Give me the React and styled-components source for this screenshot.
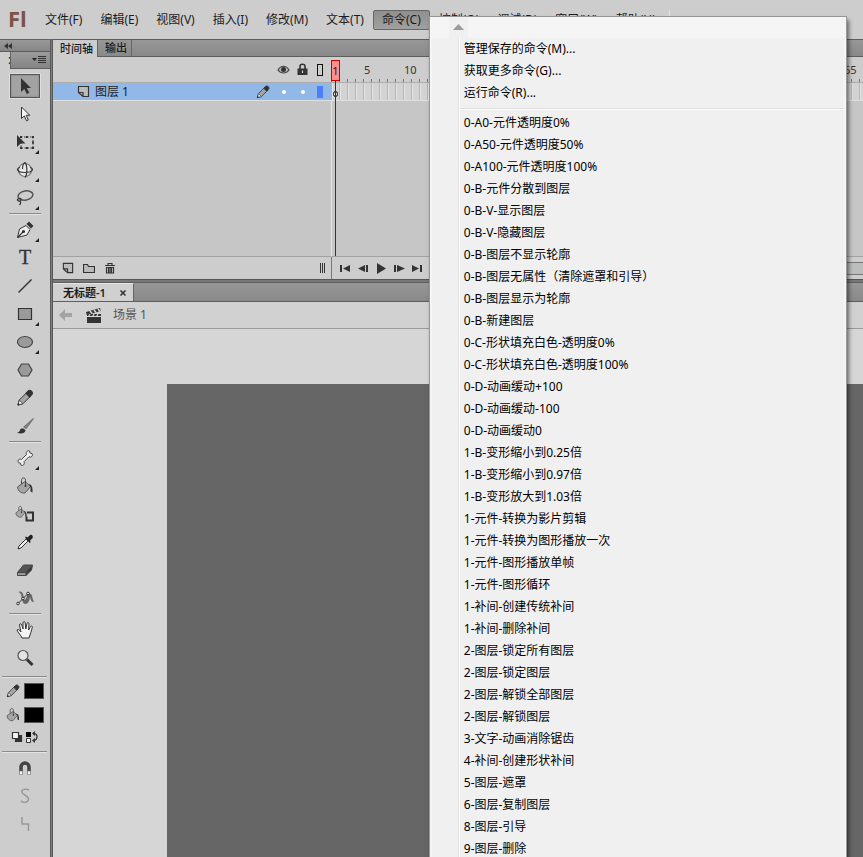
import React from "react";
import styled, { createGlobalStyle, css } from "styled-components";

const Global = createGlobalStyle`
  *, *::before, *::after { box-sizing: border-box; }
  body { margin: 0; background: #cdcdcd; }
  body, button { font-family: "Noto Sans", "Noto Sans CJK SC", sans-serif; font-size: 12px; line-height: 16px; color: #1c1c1c; }
  button { border: 0; padding: 0; background: none; white-space: nowrap; }
  ul { list-style: none; margin: 0; padding: 0; }
  svg { display: block; flex: none; }
`;

const Shell = styled.div`
  height: 100vh;
  overflow: hidden;
  display: flex;
  flex-direction: column;
  background: #cdcdcd;
`;

/* ---------- menu bar ---------- */
const MenuBar = styled.header`
  flex: none;
  height: 39px;
  display: flex;
  align-items: center;
`;
const Logo = styled.div`
  width: 36px;
  padding: 0 0 4px 8px;
  font: bold 22px/28px "Open Sans", "Noto Sans", sans-serif;
  color: #7d5348;
`;
const Menus = styled.ul`
  display: flex;
  height: 20px;
  padding-right: 4px;
  border-right: 1px solid #e4e4e4;
`;
const MenuHolder = styled.li`
  position: relative;
`;
const MenuButton = styled.button`
  height: 20px;
  padding: 0 8px;
  border: 1px solid transparent;
  border-radius: 2px;
  ${(p) => p.$open && css`
    background: linear-gradient(#8f8f8f, #a0a0a0);
    border-color: #666;
  `}
`;
const Popup = styled.div`
  position: absolute;
  z-index: 5;
  top: 6px;
  left: calc(100% - 1px);
  width: 418px;
  border: 1px solid #979797;
  background: #f5f5f5;
  box-shadow: 2px 4px 4px rgba(0, 0, 0, 0.5);
  padding: 0 2px;
`;
const ScrollUp = styled.button`
  display: grid;
  place-items: center;
  width: 19px;
  height: 21px;
  margin-left: 17px;
  background: #f0f0f0;
`;
const PopupBody = styled.ul`
  background: linear-gradient(90deg, #f0f0f0 26px, #e2e2e2 26px, #e2e2e2 27px, #fff 27px, #fff 28px, #f0f0f0 28px);
`;
const PopupItem = styled.button`
  display: block;
  width: 100%;
  height: 22px;
  padding-left: 32px;
  line-height: 22px;
  text-align: left;
  color: #000;
`;
const PopupRule = styled.hr`
  height: 2px;
  margin: 0 0 0 28px;
  border: 0;
  border-top: 1px solid #e0e0e0;
  border-bottom: 1px solid #fff;
`;
const RuleRow = styled.li`
  padding: 4px 0 2px;
`;

/* ---------- tool panel ---------- */
const Workspace = styled.div`
  flex: 1;
  min-height: 0;
  display: flex;
`;
const ToolPanel = styled.aside`
  flex: none;
  display: flex;
  flex-direction: column;
  width: 53px;
  border-right: 3px double #585858;
  border-top: 1px solid #626262;
  background: linear-gradient(#cdcdcd, #cdcdcd) padding-box, #7e7e7e;
`;
const PanelHead = styled.button`
  display: flex;
  width: 100%;
  height: 12px;
  align-items: center;
  padding-left: 4px;
  background: linear-gradient(#999, #858585);
  border-bottom: 1px solid #5c5c5c;
`;
const PanelTitle = styled.div`
  display: flex;
  height: 20px;
`;
const ClippedTitle = styled.span`
  width: 10px;
  padding-left: 8px;
  overflow: hidden;
`;
const PanelMenu = styled.button`
  flex: 1;
  height: 17px;
  display: flex;
  align-items: center;
  justify-content: flex-end;
  padding-right: 4px;
  background: linear-gradient(#9b9b9b, #848484);
  border: 1px solid #606060;
  border-width: 0 0 1px 1px;
`;
const Tool = styled.button`
  position: relative;
  flex: none;
  display: grid;
  place-items: center;
  width: 30px;
  height: 24px;
  margin: 2px 10px;
  opacity: ${(p) => (p.$off ? 0.35 : 1)};
  ${(p) => p.$on && css`
    background: #a3a3a3;
    border: 1px solid #555;
    box-shadow: 0 0 0 1px #dedede, inset 0 0 2px #777;
  `}
  ${(p) => p.$more && css`
    &::after {
      content: "";
      position: absolute;
      right: 1px;
      bottom: 0;
      border: 2px solid #222;
      border-top-color: transparent;
      border-left-color: transparent;
    }
  `}
`;
const ToolRule = styled.hr`
  flex: none;
  height: 2px;
  margin: ${(p) => (p.$wide ? "4px 3px 1px 2px" : "1px 9px")};
  border: 0;
  border-top: 1px solid #8a8a8a;
  border-bottom: 1px solid #e4e4e4;
`;
const SwatchRow = styled.div`
  height: 24px;
  display: flex;
  align-items: center;
  gap: 3px;
  padding-left: 5px;
`;
const Swatch = styled.button`
  width: 20px;
  height: 16px;
  background: #000;
  border: 1px solid #555;
`;
const SwapRow = styled.div`
  height: 20px;
  display: flex;
  align-items: center;
  gap: 3px;
  padding-left: 11px;
`;

/* ---------- timeline ---------- */
const Content = styled.main`
  flex: 1;
  min-width: 0;
  display: flex;
  flex-direction: column;
`;
const TabBar = styled.div`
  flex: none;
  display: flex;
  height: ${(p) => p.$h}px;
  background: linear-gradient(#979797, #898989);
  border-top: 1px solid #5e5e5e;
  border-bottom: 1px solid #5e5e5e;
`;
const Tab = styled.button`
  padding: 0 4px 0 7px;
  border-right: 1px solid #666;
  font-size: 11px;
  font-weight: 500;
  ${(p) => p.$on && css`
    background: #cdcdcd;
    margin-bottom: -1px;
  `}
`;
const Timeline = styled.section`
  flex: none;
  display: grid;
  grid-template-columns: 278px 1fr;
  grid-template-rows: 26px 18px 156px 22px;
  overflow: hidden;
`;
const LayerHead = styled.div`
  display: flex;
  justify-content: flex-end;
  align-items: center;
  padding-right: 4px;
  background: #cdcdcd;
  border-bottom: 1px solid #adadad;
`;
const Cell = styled.span`
  display: grid;
  place-items: center;
  width: ${(p) => p.$w || 19}px;
`;
const LayerRow = styled.div`
  display: flex;
  align-items: center;
  padding: 0 4px 0 24px;
  background: #92b8e8;
  border-bottom: 1px solid #e0e0e0;
`;
const LayerName = styled.span`
  flex: 1;
  padding-left: 5px;
`;
const Dot = styled.i`
  width: 4px;
  height: 4px;
  border-radius: 2px;
  background: #fff;
`;
const Outline = styled.i`
  width: 6px;
  height: 12px;
  border: 1px solid ${(p) => (p.$fill ? "#4d7dff" : "#111")};
  background: ${(p) => (p.$fill ? "#4d7dff" : "transparent")};
`;
const Ruler = styled.div`
  display: flex;
  border-bottom: 1px solid #adadad;
  background:
    repeating-linear-gradient(90deg, #777 0 1px, transparent 1px 8px) left bottom / 100% 3px no-repeat,
    #cdcdcd;
`;
const PlayheadSlot = styled.div`
  flex: none;
  width: 32px;
  padding-top: 3px;
`;
const Mark = styled.span`
  flex: none;
  width: 40px;
  padding-top: 6px;
  padding-left: 1px;
  font-size: 11px;
  line-height: 14px;
  color: #333;
`;
const Playhead = styled.div`
  position: relative;
  z-index: 2;
  width: 9px;
  height: 21px;
  border: 1px solid #c00;
  background: #ff8f8f;
  font-size: 11px;
  line-height: 19px;
  text-align: center;
  &::after {
    content: "";
    position: absolute;
    left: 3px;
    top: 20px;
    height: 175px;
    border-left: 1px solid #b00000;
  }
`;
const Frames = styled.div`
  display: flex;
  align-items: flex-end;
  padding: 0 0 3px 2px;
  background:
    repeating-linear-gradient(90deg, #b5b5b5 0 1px, #e4e4e4 1px 2px, #d3d3d3 2px 8px);
  border-bottom: 1px solid #e0e0e0;
`;
const Key = styled.i`
  width: 5px;
  height: 6px;
  border: 1px solid #111;
  border-radius: 3px;
`;
const Blank = styled.div`
  background: #c6c6c6;
  border-bottom: 1px solid #a2a2a2;
  border-left: ${(p) => (p.$edge ? "1px solid #e6e6e6" : "0")};
`;
const LayerTools = styled.div`
  display: flex;
  align-items: center;
  gap: 9px;
  padding: 0 5px 0 9px;
  background: #cdcdcd;
`;
const IconButton = styled.button`
  display: grid;
  place-items: center;
  margin-left: ${(p) => (p.$end ? "auto" : "0")};
`;
const Playback = styled.div`
  display: flex;
  align-items: center;
  gap: 5px;
  padding-left: 7px;
  background: #cdcdcd;
  border-left: 1px solid #777;
`;
const ScrollTrack = styled.div`
  flex: 1;
  height: 13px;
  margin-left: 80px;
  background: #babebd;
  border: 1px solid #777;
  border-width: 1px 0;
`;
const Split = styled.div`
  flex: none;
  height: 3px;
  border-top: 1px solid #565656;
  background: #787878;
`;

/* ---------- document ---------- */
const DocTab = styled.div`
  display: flex;
  align-items: center;
  gap: 13px;
  padding: 0 6px 0 10px;
  background: #d0d0d0;
  border-right: 1px solid #666;
  border-top: 1px solid #e4e4e4;
  font-size: 11px;
  font-weight: 600;
`;
const SceneBar = styled.nav`
  flex: none;
  height: 27px;
  display: flex;
  align-items: center;
  padding-left: 6px;
  background: #d1d1d1;
  border-bottom: 1px solid #999;
  color: #555;
`;
const Clap = styled.span`
  padding: 0 11px 0 13px;
`;
const Pasteboard = styled.div`
  flex: 1;
  display: flex;
  padding: 55px 0 0 114px;
  background: #d6d6d6;
`;
const Stage = styled.div`
  flex: 1;
  background: #666;
`;

/* ---------- icons ---------- */
const Svg = ({ w = 20, h = 20, vb, children }) => (
  <svg width={w} height={h} viewBox={vb || `0 0 ${w} ${h}`} fill="none" stroke="#333" strokeWidth="1.2" aria-hidden="true">
    {children}
  </svg>
);
const PencilShape = () => (
  <>
    <path d="M3 17l1.300-5L12 4.300l3.700 3.700L8 15.700z" fill="#a5a5a5" strokeWidth="1" />
    <path d="M11 5.300l2.300-2.300c1-1 2.600-.4 3.300.3s1.300 2.300.2 3.300L14.600 9z" fill="#333" />
    <path d="M3 17l1.300-5 3.700 3.700z" fill="#f2f2f2" strokeWidth=".8" />
    <path d="M2.500 17.500l.8-2.500 1.700 1.700z" fill="#222" stroke="none" />
  </>
);
const BucketShape = () => (
  <>
    <path d="M2.500 11L10 5.500l5.500 5L10 17c-3.500.5-7-1.500-7.500-6z" fill="#a6a6a6" stroke="#555" strokeWidth="1" />
    <path d="M6.500 8V4.500c0-3.500 4-3.500 4 0v5" stroke="#444" strokeWidth="1" />
    <circle cx="10.500" cy="10" r="1" fill="#333" stroke="none" />
    <path d="M13.500 8c3 .3 4.500 3 4 8.500l-2-1V11z" fill="#333" stroke="none" />
  </>
);
const PageShape = () => <path d="M1.500 1.500h10v10H6l-4.500-4zM1.500 7.500H6v4" fill="#bcbcbc" />;

const icons = {
  select: <path d="M6 2v14l3.300-3 2.500 5 2.500-1.200-2.500-4.800H16z" fill="#333" stroke="none" />,
  subselect: <path d="M6.500 3v11.500l2.800-2.500 2.200 4.800 1.800-.8-2.100-4.700h3.600z" fill="#f5f5f5" strokeWidth="1" />,
  transform: (
    <>
      <path d="M6 5h12v11H6z" strokeDasharray="1.500 1.500" strokeWidth="1" />
      <path d="M5 4h2v2H5zM11 4h2v2h-2zM17 4h2v2h-2zM17 9.500h2v2h-2zM17 15h2v2h-2zM11 15h2v2h-2zM5 15h2v2H5z" fill="#333" stroke="none" />
      <path d="M2 3v12l3.500-3.500h5z" fill="#333" stroke="none" />
    </>
  ),
  rotate: (
    <>
      <circle cx="10" cy="10" r="6.500" fill="#e8e8e8" stroke="#777" />
      <path d="M10 2.500c2.500 3 2.500 12 0 15M2.500 9.500c0 4 15 4 15 0M2.500 9.500c0-1.500 1.500-2 2.500-2.300M17.500 9.500c0-1.500-1.500-2-2.500-2.300M10 2.500C8 3.500 7.500 7 7.500 9" />
    </>
  ),
  lasso: (
    <>
      <ellipse cx="10.500" cy="7.500" rx="7.500" ry="4.500" transform="rotate(-10 10.500 7.500)" strokeWidth="1.500" stroke="#555" />
      <path d="M4.500 10.500c-3 0-2.500 3 0 2.500s1.500-3 0-2.500M5 13c1 1 1 2.500-.5 4" />
    </>
  ),
  pen: (
    <>
      <path d="M2.500 17.500l2-8.500 6.500-3.500 4 4L12 15z" fill="#eee" strokeWidth="1" />
      <path d="M2.500 17.500l6-6" />
      <circle cx="8.500" cy="11.500" r="1" fill="#333" />
      <path d="M11.500 4l2.500-2.500L18.500 6 16 8.500z" fill="#333" stroke="none" />
    </>
  ),
  text: <text x="10" y="16" textAnchor="middle" fontFamily="Liberation Serif, serif" fontSize="20" fill="#333" strokeWidth=".3">T</text>,
  line: <path d="M3.500 16.500l13-13" strokeWidth="1.500" />,
  rect: <path d="M3.500 4.500h13v11h-13z" fill="#9a9a9a" />,
  oval: <ellipse cx="10" cy="10" rx="7.500" ry="5.500" fill="#9a9a9a" stroke="#444" />,
  poly: <path d="M6.500 4h7l3.500 6-3.500 6h-7L3 10z" fill="#9a9a9a" stroke="#444" />,
  pencil: <PencilShape />,
  brush: (
    <>
      <path d="M18.500 2.500L11 12.500l-2-1.500z" fill="#888" stroke="#777" />
      <path d="M2 16.500c2 0 2.500-1 3-2.500 1-2 4-2 5.500.5-.5 3-5 4-8.500 2z" fill="#333" stroke="none" />
    </>
  ),
  bone: <path d="M6.500 11.500l5-5c-1-2.500 1-4.500 3-3.500l.5 2 2 .5c1.500 2-.8 4.500-3 3.200l-5 5c1 2.500-1 4.500-3 3.500l-.5-2-2-.5c-1.500-2 .5-4.500 3-3.200z" fill="#eee" stroke="#444" strokeWidth="1" />,
  bucket: <BucketShape />,
  ink: (
    <>
      <g transform="translate(-1 1) scale(.72)"><BucketShape /></g>
      <path d="M12 8.500h6v8h-6.500v-4" strokeWidth="2" />
    </>
  ),
  dropper: (
    <>
      <path d="M3 17l1-3 7-7 2 2-7 7z" fill="#eee" strokeWidth="1" />
      <path d="M10 5.500l1-1 1.500 1 2-2c1-1 2.500-.8 3 .2s.5 2-.5 3L15 8.500l.7 1.500-1 1z" fill="#222" stroke="none" />
    </>
  ),
  eraser: (
    <>
      <path d="M11 12.500L17.500 5l-1 5-5.500 5.500z" fill="#333" stroke="#444" strokeWidth="1" />
      <path d="M2.500 12.500L8.500 5h9L11 12.500z" fill="#555" stroke="#444" strokeWidth="1" />
      <path d="M2.500 12.500H11v3H2.500z" fill="#999" stroke="#444" strokeWidth="1" />
    </>
  ),
  width: (
    <>
      <path d="M3.500 4c4-2 5 3 5.500 6.500s2.500 0 3-3 4-3 5 .5 1 3.500 2 6c-3 0-3.500-2.500-4-5-.5 3-1.500 7-4.500 7S7 12 6.500 8.500 5 5 3.500 4z" fill="#666" stroke="none" />
      <path d="M3 15.500l10-10" strokeWidth="1" />
      <circle cx="3" cy="15.500" r="1.300" fill="#eee" strokeWidth="1" /><circle cx="8" cy="10.500" r="1.300" fill="#eee" strokeWidth="1" /><circle cx="13" cy="5.500" r="1.300" fill="#eee" strokeWidth="1" />
    </>
  ),
  hand: <path d="M7 18c-1-3-4-5-5-8 1-1.200 2.500-.2 4 2L4.500 5c0-1.800 2-1.500 2.300 0L8 9V2.800c0-1.600 2-1.600 2.200 0L10.800 9 12 3.500c.4-1.500 2.200-1 2 .5L13.600 10l1.900-3.500c1-1.300 2.300-.3 1.800 1-1.300 3.500-1.800 7-3.300 10.500z" fill="#f5f5f5" strokeWidth="1" />,
  zoom: (
    <>
      <circle cx="8" cy="7.500" r="5" fill="#e4e4e4" stroke="#555" />
      <path d="M12 11.500l5.500 5.500" strokeWidth="3" />
    </>
  ),
  magnet: (
    <>
      <path d="M6 15.500V9a4 4 0 018 0v6.500" stroke="#444" strokeWidth="3.500" />
      <path d="M4.500 13h3v3.500h-3zM12.500 13h3v3.500h-3z" fill="#f4f4f4" stroke="#777" strokeWidth=".6" />
    </>
  ),
  smooth: <path d="M14 4C9 2 6 4 7 6.500S14 10 13.500 13.500 8 17 6 15" strokeWidth="1.400" />,
  straight: <path d="M7 3v7h6.500v7" strokeWidth="1.400" />,
};

const toolGroups = [
  [["select", "选择工具"], ["subselect", "部分选取工具"], ["transform", "任意变形工具", 1], ["rotate", "3D旋转工具", 1], ["lasso", "套索工具", 1]],
  [["pen", "钢笔工具", 1], ["text", "文本工具"], ["line", "线条工具"], ["rect", "矩形工具", 1], ["oval", "椭圆工具", 1], ["poly", "多角星形工具"], ["pencil", "铅笔工具"], ["brush", "刷子工具"]],
  [["bone", "骨骼工具", 1], ["bucket", "颜料桶工具"], ["ink", "墨水瓶工具"], ["dropper", "滴管工具"], ["eraser", "橡皮擦工具"], ["width", "宽度工具"]],
  [["hand", "手形工具"], ["zoom", "缩放工具"]],
];

const menusBefore = ["文件(F)", "编辑(E)", "视图(V)", "插入(I)", "修改(M)", "文本(T)"];
const menusAfter = ["控制(O)", "调试(D)", "窗口(W)", "帮助(H)"];
const manage = ["管理保存的命令(M)...", "获取更多命令(G)...", "运行命令(R)..."];
const commands = [
  "0-A0-元件透明度0%", "0-A50-元件透明度50%", "0-A100-元件透明度100%", "0-B-元件分散到图层",
  "0-B-V-显示图层", "0-B-V-隐藏图层", "0-B-图层不显示轮廓", "0-B-图层无属性（清除遮罩和引导）",
  "0-B-图层显示为轮廓", "0-B-新建图层", "0-C-形状填充白色-透明度0%", "0-C-形状填充白色-透明度100%",
  "0-D-动画缓动+100", "0-D-动画缓动-100", "0-D-动画缓动0", "1-B-变形缩小到0.25倍",
  "1-B-变形缩小到0.97倍", "1-B-变形放大到1.03倍", "1-元件-转换为影片剪辑", "1-元件-转换为图形播放一次",
  "1-元件-图形播放单帧", "1-元件-图形循环", "1-补间-创建传统补间", "1-补间-删除补间",
  "2-图层-锁定所有图层", "2-图层-锁定图层", "2-图层-解锁全部图层", "2-图层-解锁图层",
  "3-文字-动画消除锯齿", "4-补间-创建形状补间", "5-图层-遮罩", "6-图层-复制图层", "8-图层-引导", "9-图层-删除",
];
const marks = Array.from({ length: 13 }, (_, i) => (i + 1) * 5);

const playback = [
  ["第一帧", "M1 2h2v7H1zM11 2v7L4 5.500z"],
  ["后退一帧", "M1 5.500L8 2v7zM9 2h2v7H9z"],
  ["播放", "M2 0l9 5.500L2 11z"],
  ["前进一帧", "M1 2h2v7H1zM4 2l8 3.500L4 9z"],
  ["最后一帧", "M1 2l7 3.500L1 9zM9 2h2v7H9z"],
];

function CommandPopup() {
  return (
    <Popup>
      <ScrollUp aria-label="向上滚动">
        <Svg w={11} h={6}><path d="M0 6l5.500-6L11 6z" fill="#9b9b9b" stroke="none" /></Svg>
      </ScrollUp>
      <PopupBody>
        {manage.map((t) => <li key={t}><PopupItem>{t}</PopupItem></li>)}
        <RuleRow><PopupRule /></RuleRow>
        {commands.map((t) => <li key={t}><PopupItem>{t}</PopupItem></li>)}
      </PopupBody>
    </Popup>
  );
}

function Tools() {
  return (
    <ToolPanel>
      <PanelHead aria-label="折叠面板">
        <Svg w={8} h={6}><path d="M4 0v6L0 3zM8 0v6L4 3z" fill="#333" stroke="none" /></Svg>
      </PanelHead>
      <PanelTitle>
        <ClippedTitle>:</ClippedTitle>
        <PanelMenu aria-label="面板菜单">
          <Svg w={14} h={8}><path d="M0 2h5L2.500 5z" fill="#222" stroke="none" /><path d="M6 .5h8M6 2.500h8M6 4.500h8M6 6.500h8" strokeWidth="1" /></Svg>
        </PanelMenu>
      </PanelTitle>
      {toolGroups.map((group, i) => (
        <React.Fragment key={i}>
          {i > 0 && <ToolRule />}
          {group.map(([id, label, more]) => (
            <Tool key={id} aria-label={label} $on={id === "select"} $more={!!more}><Svg>{icons[id]}</Svg></Tool>
          ))}
        </React.Fragment>
      ))}
      <ToolRule $wide />
      <SwatchRow><Svg w={16} h={16} vb="0 0 20 20"><PencilShape /></Svg><Swatch aria-label="笔触颜色" /></SwatchRow>
      <SwatchRow><Svg w={16} h={16} vb="0 0 20 20"><BucketShape /></Svg><Swatch aria-label="填充颜色" /></SwatchRow>
      <SwapRow>
        <IconButton aria-label="黑白"><Svg w={12} h={12}><path d="M4.500 4.500h6v6h-6z" fill="#333" /><path d="M1.500 1.500h6v6h-6z" fill="#f4f4f4" /></Svg></IconButton>
        <IconButton aria-label="交换颜色"><Svg w={12} h={12}><path d="M0 1h5v5H0z" fill="#000" stroke="none" /><path d="M.5 7.500h4v4h-4z" fill="#f4f4f4" strokeWidth="1" /><path d="M8 2.500c4 0 4 6 0 7" /><path d="M9 0v5L6 2.500zM9 7v5L6 9.500z" fill="#333" stroke="none" /></Svg></IconButton>
      </SwapRow>
      <ToolRule $wide />
      <Tool aria-label="贴紧至对象"><Svg>{icons.magnet}</Svg></Tool>
      <Tool aria-label="平滑" $off disabled><Svg>{icons.smooth}</Svg></Tool>
      <Tool aria-label="伸直" $off disabled><Svg>{icons.straight}</Svg></Tool>
    </ToolPanel>
  );
}

function TimelinePanel() {
  return (
    <>
      <TabBar $h={18}><Tab $on>时间轴</Tab><Tab>输出</Tab></TabBar>
      <Timeline>
        <LayerHead>
          <Cell><Svg w={13} h={10}><path d="M1 5c3-5 8-5 11 0-3 4-8 4-11 0z" fill="#bbb" stroke="#444" /><circle cx="6.500" cy="4.500" r="2.500" fill="#333" stroke="none" /></Svg></Cell>
          <Cell><Svg w={11} h={13}><path d="M3 6V3.500c0-3 5-3 5 0V6" strokeWidth="1.600" /><path d="M.5 5.500h10V12H.5z" fill="#333" stroke="none" /><path d="M5.500 7.500V10" stroke="#ccc" /></Svg></Cell>
          <Cell $w={15}><Outline /></Cell>
        </LayerHead>
        <Ruler>
          <PlayheadSlot><Playhead>1</Playhead></PlayheadSlot>
          {marks.map((n) => <Mark key={n}>{n}</Mark>)}
        </Ruler>
        <LayerRow>
          <Svg w={13} h={13}><PageShape /></Svg>
          <LayerName>图层 1</LayerName>
          <Cell $w={22}><Svg w={16} h={16} vb="0 0 20 20"><PencilShape /></Svg></Cell>
          <Cell><Dot /></Cell><Cell><Dot /></Cell><Cell $w={15}><Outline $fill /></Cell>
        </LayerRow>
        <Frames><Key /></Frames>
        <Blank />
        <Blank $edge />
        <LayerTools>
          <IconButton aria-label="新建图层"><Svg w={12} h={12} vb="0 0 13 13"><PageShape /></Svg></IconButton>
          <IconButton aria-label="新建文件夹"><Svg w={12} h={11}><path d="M.5 1.500h4l1 2h6v6H.5z" fill="#bbb" /></Svg></IconButton>
          <IconButton aria-label="删除"><Svg w={12} h={12}><path d="M1 3.500h10M4 3V1.500h4V3M2 5.500h8M2.500 5v6h7V5M4.500 5.500v5M6 5.500v5M7.500 5.500v5" /></Svg></IconButton>
          <IconButton $end aria-label="调整宽度"><Svg w={6} h={10}><path d="M.5 0v10M2.500 0v10M4.500 0v10" strokeWidth="1" /></Svg></IconButton>
        </LayerTools>
        <Playback>
          {playback.map(([label, d]) => (
            <IconButton key={label} aria-label={label}><Svg w={13} h={11}><path d={d} fill="#333" stroke="none" /></Svg></IconButton>
          ))}
          <ScrollTrack />
        </Playback>
      </Timeline>
      <Split />
    </>
  );
}

export default function App() {
  return (
    <Shell>
      <Global />
      <MenuBar>
        <Logo>Fl</Logo>
        <Menus>
          {menusBefore.map((m) => <li key={m}><MenuButton>{m}</MenuButton></li>)}
          <MenuHolder>
            <MenuButton $open aria-expanded="true">命令(C)</MenuButton>
            <CommandPopup />
          </MenuHolder>
          {menusAfter.map((m) => <li key={m}><MenuButton>{m}</MenuButton></li>)}
        </Menus>
      </MenuBar>
      <Workspace>
        <Tools />
        <Content>
          <TimelinePanel />
          <TabBar $h={20}>
            <DocTab>
              无标题-1
              <IconButton aria-label="关闭"><Svg w={8} h={8}><path d="M1.500 1.500l5 5M6.500 1.500l-5 5" strokeWidth="1.600" /></Svg></IconButton>
            </DocTab>
          </TabBar>
          <SceneBar>
            <IconButton aria-label="返回"><Svg w={13} h={12}><path d="M0 6l6-6v4h7v4H6v4z" fill="#a3a3a3" stroke="none" /></Svg></IconButton>
            <Clap><Svg w={17} h={15}><path d="M1 4l14-4 .8 3L1.800 7z" fill="#333" stroke="none" /><path d="M5 3l2 2.500M9 2l2 2.500M13 1l2 2.500" stroke="#ddd" strokeWidth="1.500" /><path d="M2 6h14v9H2z" fill="#333" stroke="none" /><path d="M2 8.500h14M5 6l-1.500 2.500M9 6L7.500 8.500M13 6l-1.500 2.500" stroke="#ddd" /></Svg></Clap>
            场景 1
          </SceneBar>
          <Pasteboard><Stage /></Pasteboard>
        </Content>
      </Workspace>
    </Shell>
  );
}
